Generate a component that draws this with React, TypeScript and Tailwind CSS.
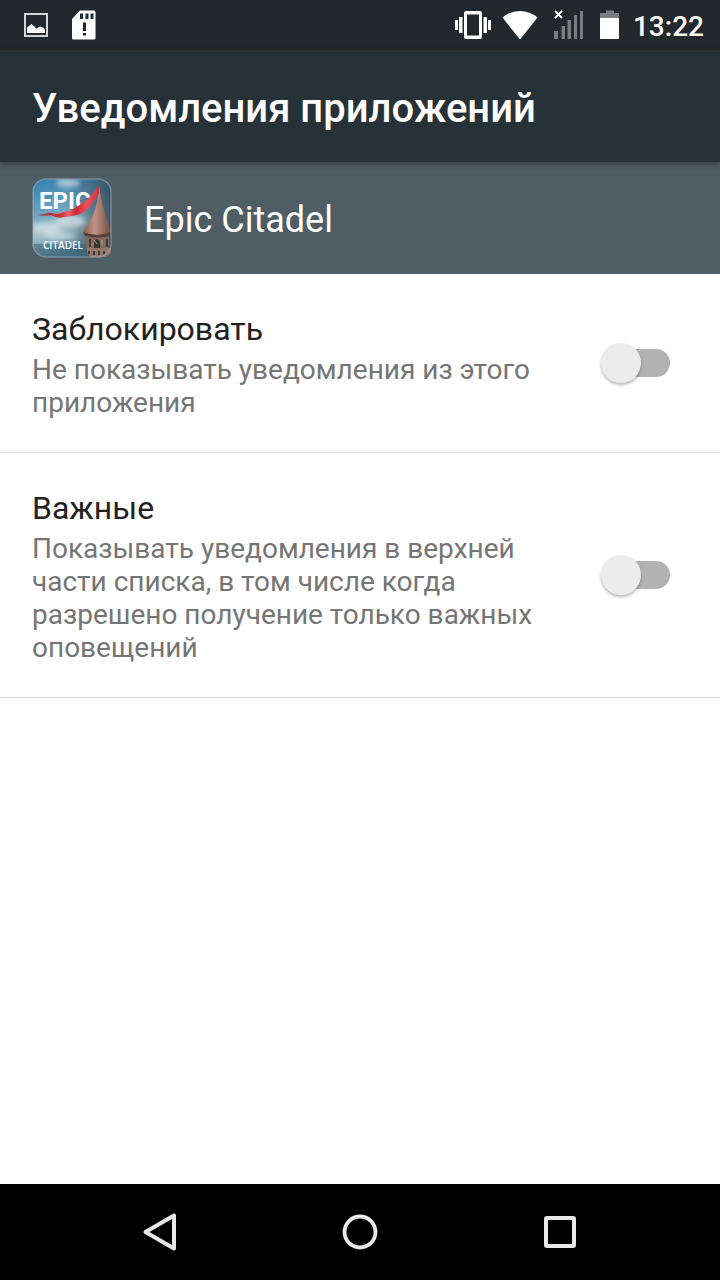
import { useState } from "react";

function PictureIcon() {
  return (
    <svg width="24" height="24" viewBox="0 0 24 24" aria-hidden="true">
      <rect x="1" y="1" width="22" height="22" fill="none" stroke="#d3d4d5" strokeWidth="2" />
      <path d="M3 20V14.5L7.5 11L12.5 15.5L16.5 13.5L20 15L21 17V20Z" fill="#fff" />
    </svg>
  );
}

function SdCardIcon() {
  return (
    <svg width="24" height="30" viewBox="0 0 24 30" aria-hidden="true">
      <path
        fillRule="evenodd"
        fill="#fff"
        d="M8 0.5H22Q23.5 0.5 23.5 2V28Q23.5 29.5 22 29.5H1.5Q0 29.5 0 28V9ZM8 3.5V9H11V3.5ZM13.5 3.5V9H16.5V3.5ZM18.5 3.5V9H21.5V3.5ZM11 12.5V21H14V12.5ZM11 23V25.5H14V23Z"
      />
    </svg>
  );
}

function VibrateIcon() {
  return (
    <svg width="36" height="30" viewBox="0 0 36 30" aria-hidden="true">
      <path
        fillRule="evenodd"
        fill="#fff"
        d="M11 1H25Q27 1 27 3V27Q27 29 25 29H11Q9 29 9 27V3Q9 1 11 1ZM12 4.5V25.5H24V4.5Z"
      />
      <path d="M4 7H7.5V23H4ZM0 10H3V20H0ZM28.5 7H32V23H28.5ZM33 10H36V20H33Z" fill="#fff" />
    </svg>
  );
}

function WifiIcon() {
  return (
    <svg width="36" height="30" viewBox="0 0 36 30" aria-hidden="true">
      <path d="M0.5 7.5Q8 1 18 1Q28 1 35.5 7.5L18 29.5Z" fill="#fff" />
    </svg>
  );
}

function SignalIcon() {
  return (
    <svg width="30" height="30" viewBox="0 0 30 30" aria-hidden="true">
      <path d="M0 21H4V29H0ZM7.5 16H11V29H7.5ZM13.5 10H17V29H13.5ZM20 5H23V29H20ZM26 1H29V29H26Z" fill="#7a7d80" />
      <path d="M1 1L8 8M8 1L1 8" stroke="#fff" strokeWidth="2" />
    </svg>
  );
}

function BatteryIcon() {
  return (
    <svg width="20" height="30" viewBox="0 0 20 30" aria-hidden="true">
      <path d="M6 0.5H14V3H19V8H0V3H6Z" fill="#7a7d80" />
      <path d="M0 8H19V29H0Z" fill="#fff" />
    </svg>
  );
}

function AppIcon() {
  return (
    <svg width="80" height="80" viewBox="0 0 80 80" role="img" aria-label="Epic Citadel">
      <defs>
        <linearGradient id="sky" x1="0" y1="0" x2="0.25" y2="1">
          <stop offset="0" stopColor="#2f7db0" />
          <stop offset="0.45" stopColor="#6fa5c2" />
          <stop offset="0.7" stopColor="#a3bfca" />
          <stop offset="1" stopColor="#4f7f93" />
        </linearGradient>
        <linearGradient id="storm" x1="0" y1="0" x2="1" y2="0">
          <stop offset="0.4" stopColor="#344a5a" stopOpacity="0" />
          <stop offset="1" stopColor="#344a5a" stopOpacity="0.9" />
        </linearGradient>
        <linearGradient id="roof" x1="0" y1="0" x2="1" y2="0">
          <stop offset="0" stopColor="#8a5c50" />
          <stop offset="0.4" stopColor="#c09384" />
          <stop offset="1" stopColor="#6b463f" />
        </linearGradient>
        <linearGradient id="ribbon" x1="0" y1="0" x2="1" y2="0">
          <stop offset="0" stopColor="#a72631" />
          <stop offset="0.4" stopColor="#d8323d" />
          <stop offset="0.5" stopColor="#f0606a" />
          <stop offset="0.62" stopColor="#c92732" />
          <stop offset="0.8" stopColor="#ee505a" />
          <stop offset="1" stopColor="#cf3540" />
        </linearGradient>
        <filter id="haze" x="-20%" y="-20%" width="140%" height="140%">
          <feGaussianBlur stdDeviation="2.5" />
        </filter>
        <clipPath id="tile">
          <rect x="1" y="1" width="78" height="78" rx="13" />
        </clipPath>
      </defs>
      <g clipPath="url(#tile)">
        <rect width="80" height="80" fill="url(#sky)" />
        <rect width="80" height="80" fill="url(#storm)" />
        <g filter="url(#haze)" fill="#d5e2e7" opacity="0.75">
          <ellipse cx="14" cy="50" rx="15" ry="6" />
          <ellipse cx="38" cy="43" rx="15" ry="6" />
          <ellipse cx="28" cy="58" rx="17" ry="3" />
          <ellipse cx="36" cy="5" rx="12" ry="4" />
        </g>
        <rect y="66" width="55" height="14" fill="#376274" opacity="0.5" />
      </g>
      <text x="7" y="31" fill="#fff" className="font-[Roboto,sans-serif] text-[24px] font-bold">EPIC</text>
      <path d="M67 7C66 25 63 38 51 54Q65 60 80 54C73 39 70 26 67 7Z" fill="url(#roof)" />
      <path d="M51 54Q65 60 79 54L77 58Q65 61 53 58Z" fill="#5b3c37" />
      <path d="M54 58Q65 61 77 58V70H54Z" fill="#80685e" />
      <path d="M55 70H79V75L74 79H59L55 75Z" fill="#94796b" />
      <path d="M58 61V69M75 61V69M57 73V76M62 73V77M67 73V77M72 73V76" stroke="#403936" strokeWidth="2" />
      <path d="M62 70V64Q65 58 68 64V70Z" fill="#383735" />
      <path d="M62 62L65 66M70 62V68M60 65V68" stroke="#baa08e" />
      <path d="M67 8C60 15 57 22 49 26C43 30 38 33 32 34C28 35 26 36 23 36C18 33 15 36 6 37Q15 38 19 37Q25 41 32 39C39 38 44 38 50 35C58 31 62 23 67 15Z" fill="url(#ribbon)" />
      <text x="11" y="71" fill="#fff" className="font-['Open_Sans',sans-serif] text-[10px] font-semibold">CITADEL</text>
      <rect x="1" y="1" width="78" height="78" rx="13" fill="none" stroke="#a7b5ba" strokeOpacity="0.5" strokeWidth="1.5" />
    </svg>
  );
}

function SettingRow({ id, title, description }: { id: string; title: string; description: string }) {
  const [on, setOn] = useState(false);
  return (
    <label htmlFor={id} className="flex items-center justify-between gap-8 border-b border-[#dcdcdc] pr-[50px] pl-8">
      <span className="flex flex-col gap-[5px] pt-9 pb-[33px]">
        <span className="text-[32px] leading-[38px] text-[#212121]">{title}</span>
        <span className="text-[28px] leading-[33px] text-[#757575]">{description}</span>
      </span>
      <span className="relative flex h-10 w-[69px] shrink-0 items-center">
        <input
          id={id}
          type="checkbox"
          role="switch"
          checked={on}
          onChange={(e) => setOn(e.target.checked)}
          className="peer ml-3 h-7 w-full appearance-none rounded-full bg-[#b2b2b2] checked:bg-[#80cbc4]"
        />
        <span className="pointer-events-none absolute top-0 left-0 size-10 rounded-full bg-[#ececec] shadow-[0_2px_3px_rgba(0,0,0,0.28)] peer-checked:left-[29px] peer-checked:bg-[#009688]" />
      </span>
    </label>
  );
}

export default function App() {
  return (
    <div className="flex min-h-screen flex-col bg-white font-[Roboto,sans-serif]">
      <div className="flex h-[50px] items-center justify-between bg-[#23282c] pr-4 pl-6">
        <div className="flex items-center gap-6">
          <PictureIcon />
          <SdCardIcon />
        </div>
        <div className="flex items-center text-white">
          <div className="flex items-center gap-[11px]">
            <VibrateIcon />
            <WifiIcon />
          </div>
          <div className="ml-4 flex items-center gap-4">
            <SignalIcon />
            <BatteryIcon />
          </div>
          <time className="ml-[13px] pt-1 text-[28px] leading-8 font-medium">13:22</time>
        </div>
      </div>
      <header className="relative flex h-28 items-center bg-[#273238] px-8 pt-1.5 shadow-[0_2px_6px_rgba(0,0,0,0.35)]">
        <h1 className="text-[40px] leading-[48px] font-medium text-white">Уведомления приложений</h1>
      </header>
      <section className="flex h-28 items-center gap-8 bg-[#4f5d64] px-8">
        <AppIcon />
        <h2 className="pt-1 text-[36px] leading-[42px] text-white">Epic Citadel</h2>
      </section>
      <main className="flex-1">
        <SettingRow id="block" title="Заблокировать" description="Не показывать уведомления из этого приложения" />
        <SettingRow
          id="priority"
          title="Важные"
          description="Показывать уведомления в верхней части списка, в том числе когда разрешено получение только важных оповещений"
        />
      </main>
      <nav className="flex h-24 items-center justify-center gap-[120px] bg-black">
        <button type="button" aria-label="Назад" className="flex h-20 w-20 items-center justify-center">
          <svg width="40" height="40" viewBox="0 0 40 40">
            <path d="M34 3.5V36.5L5.5 20Z" fill="none" stroke="#e8e8e8" strokeWidth="4" strokeLinejoin="round" />
          </svg>
        </button>
        <button type="button" aria-label="Главный экран" className="flex h-20 w-20 items-center justify-center">
          <svg width="40" height="40" viewBox="0 0 40 40">
            <circle cx="20" cy="20" r="15.5" fill="none" stroke="#e8e8e8" strokeWidth="3.8" />
          </svg>
        </button>
        <button type="button" aria-label="Обзор" className="flex h-20 w-20 items-center justify-center">
          <svg width="40" height="40" viewBox="0 0 40 40">
            <rect x="6" y="6" width="28" height="28" rx="1" fill="none" stroke="#e8e8e8" strokeWidth="4" strokeLinejoin="round" />
          </svg>
        </button>
      </nav>
    </div>
  );
}
